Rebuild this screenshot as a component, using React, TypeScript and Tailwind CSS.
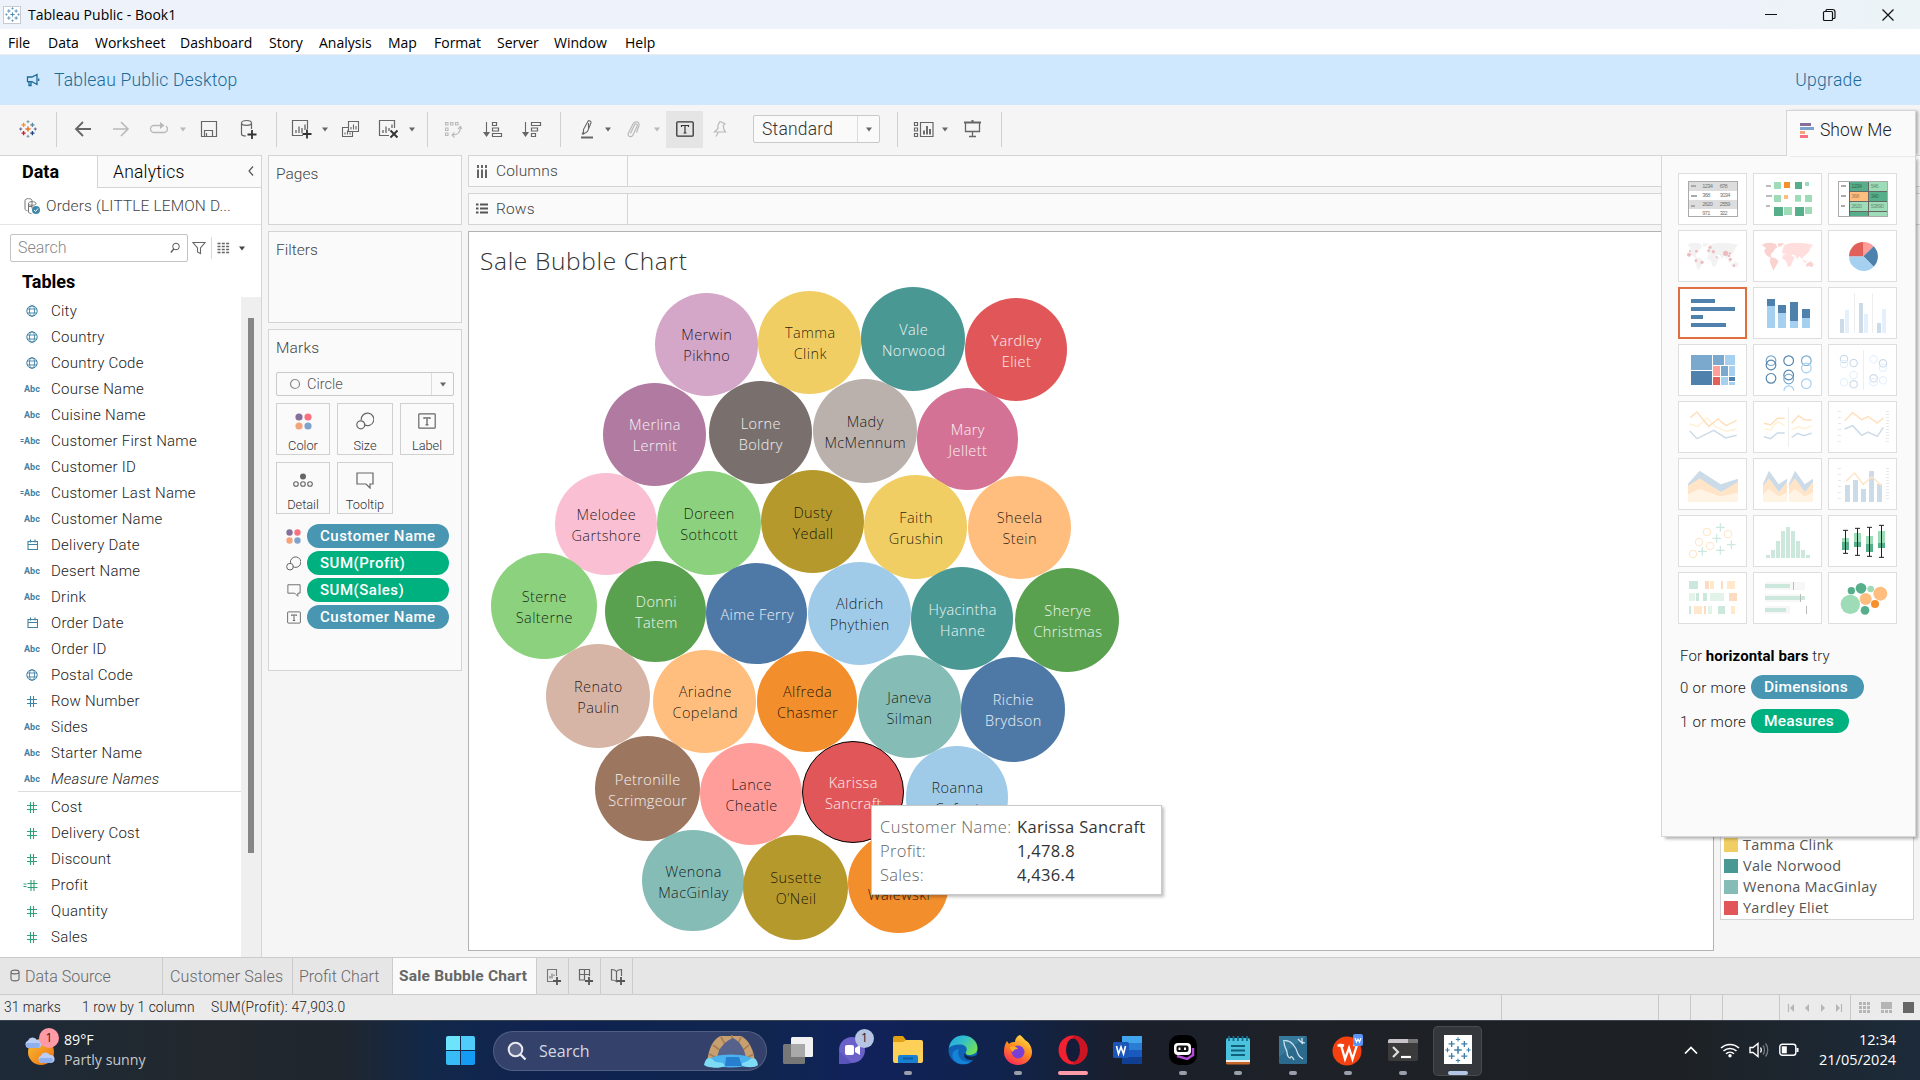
import React from "react";

type P = { className?: string };

const UI = "font-['Roboto',sans-serif] font-[350]";

function Svg({ w, h, vb, className = "", children }: { w: number; h: number; vb?: string; className?: string; children: React.ReactNode }) {
  return (
    <svg width={w} height={h} viewBox={vb ?? `0 0 ${w} ${h}`} fill="none" className={`block shrink-0 ${className}`}>
      {children}
    </svg>
  );
}

const plus = (x: number, y: number, r: number) => `M${x - r} ${y}h${2 * r}M${x} ${y - r}v${2 * r}`;

function TableauLogo({ s, mono = false, className = "" }: { s: number; mono?: boolean; className?: string }) {
  const c = (k: string) => (mono ? "#3f7fa8" : k);
  const t = (n: number) => (mono ? n * 0.72 : n);
  return (
    <Svg w={s} h={s} vb="0 0 18 18" className={className}>
      <path d={plus(9, 9, 2.6)} stroke={c("#e8762d")} strokeWidth={t(1.5)} />
      <path d={plus(4.6, 4.8, 2.1)} stroke={c("#eb912c")} strokeWidth={t(1.3)} />
      <path d={plus(13.4, 4.8, 2.1)} stroke={c("#59879b")} strokeWidth={t(1.3)} />
      <path d={plus(4.6, 13.2, 2.1)} stroke={c("#c72035")} strokeWidth={t(1.3)} />
      <path d={plus(13.4, 13.2, 2.1)} stroke={c("#1f447e")} strokeWidth={t(1.3)} />
      <path d={plus(9, 1.7, 1.5) + plus(9, 16.3, 1.5)} stroke={c("#7199a6")} strokeWidth={t(1)} />
      <path d={plus(1.7, 9, 1.5) + plus(16.3, 9, 1.5)} stroke={c("#5b6591")} strokeWidth={t(1)} />
    </Svg>
  );
}

function Caret({ className = "", color = "#666" }: { className?: string; color?: string }) {
  return (
    <Svg w={8} h={8} className={className}>
      <path d="M1 2.500h6L4 6.500z" fill={color} />
    </Svg>
  );
}

const Sep = ({ className = "" }: P) => <div className={`h-[35px] w-px shrink-0 bg-[#d0d0d0] ${className}`} />;

function TitleBar() {
  return (
    <div className="flex h-[29px] shrink-0 items-center bg-gradient-to-r from-[#eef2fa] from-90% to-[#ecf4f7] font-['Open_Sans',sans-serif]">
      <div className="ml-[3px] flex h-[18px] w-[18px] items-center justify-center border border-[#c8ccd2] bg-white">
        <TableauLogo s={15} mono />
      </div>
      <span className="ml-[7px] text-[14px] tracking-[0.020px] text-black">Tableau Public - Book1</span>
      <Svg w={140} h={20} className="ml-auto mr-[17px]">
        <path d="M2 9.500h12" stroke="#111" strokeWidth="1" />
        <path d="M60.500 7.500a1 1 0 0 1 1-1h7a1 1 0 0 1 1 1v7a1 1 0 0 1-1 1h-7a1 1 0 0 1-1-1zM63 6V5.500a1 1 0 0 1 1-1h5.500a2.500 2.500 0 0 1 2.500 2.500v5.500a1 1 0 0 1-1 1h-1" stroke="#111" strokeWidth="1.200" />
        <path d="M119.500 4.500l11 11M130.500 4.500l-11 11" stroke="#111" strokeWidth="1.200" />
      </Svg>
    </div>
  );
}

function MenuBar() {
  const items: [string, string][] = [
    ["File", "w-[40px]"], ["Data", "w-[47px]"], ["Worksheet", "w-[85px]"], ["Dashboard", "w-[89px]"],
    ["Story", "w-[50px]"], ["Analysis", "w-[69px]"], ["Map", "w-[46px]"], ["Format", "w-[63px]"],
    ["Server", "w-[57px]"], ["Window", "w-[71px]"], ["Help", "w-[50px]"],
  ];
  return (
    <div className="flex h-[26px] shrink-0 items-center border-b border-[#ececec] bg-white pl-[8px] pt-px font-['Open_Sans',sans-serif] text-[14px] text-black">
      {items.map(([t, w]) => (
        <span key={t} className={w}>{t}</span>
      ))}
    </div>
  );
}

function Banner() {
  return (
    <div className="flex h-[50px] shrink-0 items-center bg-[#cfe8fe] font-['Roboto',sans-serif] text-[17.500px] font-light text-[#1c6a96]">
      <Svg w={14} h={14} className="ml-[26px]">
        <path d="M1.500 4h4.500l5-2.500v10l-5-2.800H1.500zM3 8.700v3.800h2V9M12.700 5.500v2.500" stroke="#1c6a96" strokeWidth="1.300" />
      </Svg>
      <span className="ml-[14px] tracking-[0.200px]">Tableau Public Desktop</span>
      <span className="ml-auto mr-[58px] tracking-[0.300px]">Upgrade</span>
    </div>
  );
}

function Toolbar() {
  const g = "#666";
  const l = "#b9b9b9";
  return (
    <div className="flex h-[50px] shrink-0 items-center bg-[#f5f5f5] pb-[2px]">
      <TableauLogo s={18} className="ml-[19px]" />
      <Sep className="ml-[19px]" />
      <Svg w={18} h={18} className="ml-[17px]"><path d="M17 9H2M9 2L2 9l7 7" stroke={g} strokeWidth="1.800" /></Svg>
      <Svg w={18} h={18} className="ml-[20px]"><path d="M1 9h15M9 2l7 7-7 7" stroke={l} strokeWidth="1.600" /></Svg>
      <Svg w={20} h={18} className="ml-[19px]"><path d="M13 5.500H5a3.500 3.500 0 0 0 0 7h10a3.500 3.500 0 0 0 3.500-3.500c0-1-.5-2.200-1.500-2.900" stroke={l} strokeWidth="1.300" /><path d="M11 2l4.500 3.500L11 9z" fill={l} /></Svg>
      <Caret className="ml-[10px]" color={l} />
      <Svg w={18} h={18} className="ml-[13px]"><path d="M1.500 1.500h15v15h-15zM4.500 16v-5.500h8V16M6.500 13v3" stroke={g} strokeWidth="1.200" /></Svg>
      <Svg w={17} h={20} className="ml-[22px]"><path d="M1.500 4c0-1.500 2-2.500 5-2.500s5 1 5 2.500-2 2.300-5 2.300S1.500 5.500 1.500 4zV15c0 1.200 1.500 2 4.500 2M11.500 4v6" stroke={g} strokeWidth="1.200" /><path d={plus(12, 15.5, 4.5)} stroke="#333" strokeWidth="1.800" /></Svg>
      <Sep className="ml-[19px]" />
      <Svg w={21} h={20} className="ml-[14px]"><path d="M16.500 10V1.500h-15v15H12" stroke={g} strokeWidth="1.200" /><path d="M5 14v-3M8 14V7.500M11 14V9M14 11V5.500" stroke={g} strokeWidth="1.300" /><path d={plus(16, 15, 4.5)} stroke="#333" strokeWidth="1.800" /></Svg>
      <Caret className="ml-[9px]" />
      <Svg w={19} h={19} className="ml-[12px]"><path d="M7.500 1.500h10v10h-10zM7 7.500H1.500v9h10V12" stroke={g} strokeWidth="1.100" /><path d="M10 9.500V7M12.500 9.500V4.500M15 9.500V6M4 14.500v-2M6.500 14.500v-4M9 14.500v-2" stroke={g} strokeWidth="1.100" /></Svg>
      <Svg w={21} h={20} className="ml-[18px]"><path d="M16.500 9V1.500h-15v15H11" stroke={g} strokeWidth="1.200" /><path d="M5 14v-3M8 14V7.500M11 12V9M14 9V5.500" stroke={g} strokeWidth="1.300" /><path d="M12.500 11.500l7 7M19.500 11.500l-7 7" stroke="#333" strokeWidth="1.900" /></Svg>
      <Caret className="ml-[9px]" />
      <Sep className="ml-[11px]" />
      <Svg w={18} h={20} className="ml-[16px]"><path d="M1.500 3.500h2.500v2.500h-2.500zM6.500 3.500h2.500v2.500h-2.500zM11.500 3.500h2.500v2.500h-2.500zM1.500 9h2.500v2.500h-2.500zM1.500 14h2.500v2.500h-2.500zM16.500 8c0 5-3 8-8 8M14 10l2.500-2.500L18 10M10.500 13.500L8 16l2.500 2.500" stroke={l} strokeWidth="1.100" /></Svg>
      <Svg w={20} h={19} className="ml-[21px]"><path d="M3.500 2v13M1 12.500l2.500 3.500L6 12.500z" stroke={g} fill={g} strokeWidth="1.100" /><path d="M9.500 2.500h4v3h-4zM9.500 8h6v3h-6zM9.500 13.500h9v3h-9z" stroke={g} strokeWidth="1.200" /></Svg>
      <Svg w={20} h={19} className="ml-[19px]"><path d="M3.500 2v13M1 12.500l2.500 3.500L6 12.500z" stroke={g} fill={g} strokeWidth="1.100" /><path d="M9.500 2.500h9v3h-9zM9.500 8h6v3h-6zM9.500 13.500h4v3h-4z" stroke={g} strokeWidth="1.200" /></Svg>
      <Sep className="ml-[18px]" />
      <Svg w={14} h={20} className="ml-[19px]"><path d="M3.500 10.500L8 2.200c.8-1.200 3.500-.1 3 1.500L7.500 12.500l-4 2.500zM8.500 4v6M2 15.500l1.500-3" stroke={g} strokeWidth="1.100" /><path d="M1 18.500h12" stroke={g} strokeWidth="2" /></Svg>
      <Caret className="ml-[10px]" />
      <Svg w={15} h={19} className="ml-[14px]"><path d="M4.500 13.500l4-8.500c1-2 3.500-1 2.700 1L7 15c-1.500 3-6 1.500-4.700-1.700L7 4C8.500 .500 14 1.500 13 5.500l-2.500 7" stroke={l} strokeWidth="1.200" /></Svg>
      <Caret className="ml-[12px]" color={l} />
      <div className="ml-[5px] flex h-[37px] w-[37px] items-center justify-center bg-[#e5e5e5]">
        <Svg w={18} h={16}><rect x=".8" y=".8" width="16.400" height="14.400" rx="1" stroke="#333" strokeWidth="1.300" /><path d="M5.500 6V4.500h7V6M9 4.500v7.500M7.500 12h3" stroke="#333" strokeWidth="1.200" /></Svg>
      </div>
      <Svg w={14} h={18} className="ml-[10px]"><path d="M7 1.500l5 2.200-1.800 2 .8 4 1.500 2.300H1.500L5 8.500V5zM5.500 12L3 16.500" stroke={l} strokeWidth="1.200" /></Svg>
      <div className={`ml-[26px] flex h-[28px] w-[127px] items-center rounded-[2px] border border-[#c9c9c9] bg-[#fafafa] font-['Roboto',sans-serif] text-[17.500px] font-light text-[#333]`}>
        <span className="flex-1 pl-[8px] tracking-[0.200px]">Standard</span>
        <div className="flex h-full w-[22px] items-center justify-center border-l border-[#dcdcdc]"><Caret /></div>
      </div>
      <Sep className="ml-[17px]" />
      <Svg w={21} h={17} className="ml-[15px]"><path d="M1.500 1.500h3v3h-3zM1.500 7h3v3h-3zM1.500 12.500h3v3h-3zM7.500 1.500h12.500v14H7.500z" stroke={g} strokeWidth="1.200" /><path d="M11 13.500v-4M14 13.500V5M17 13.500V8" stroke={g} strokeWidth="1.900" /></Svg>
      <Caret className="ml-[7px]" />
      <Svg w={20} h={18} className="ml-[14px]"><path d="M1 2.500h17M9.500 0v2" stroke={g} strokeWidth="2" /><path d="M2.500 3v8.500h14V3M9.500 11.500v5M6 16.500h7" stroke={g} strokeWidth="1.300" /></Svg>
      <Sep className="ml-[18px]" />
    </div>
  );
}

type Kind = "geo" | "abc" | "=abc" | "date" | "num" | "=num";

function FieldIcon({ kind, color }: { kind: Kind; color: string }) {
  if (kind === "geo")
    return (
      <Svg w={12} h={12}><circle cx="6" cy="6" r="5.200" stroke={color} /><ellipse cx="6" cy="6" rx="2.500" ry="5.200" stroke={color} strokeWidth=".9" /><path d="M1 4h10M1 8h10" stroke={color} strokeWidth=".9" /></Svg>
    );
  if (kind === "date")
    return (
      <Svg w={11} h={12}><path d="M1 2.500h9.500v8H1zM1 5.500h9.500M3.500.500v3M8 .500v3" stroke={color} strokeWidth="1.100" /></Svg>
    );
  if (kind === "num" || kind === "=num")
    return (
      <Svg w={kind === "num" ? 10 : 19} h={12} vb={kind === "num" ? "0 0 10 12" : "-4.500 0 19 12"}>
        <path d="M0 4.500h10M0 8.500h10M3.500 1v11M6.500 1v11" stroke={color} strokeWidth="1.100" />
        {kind === "=num" && <path d="M-4 5h3M-4 7.500h3" stroke={color} />}
      </Svg>
    );
  return (
    <span className="flex items-center text-[9px] leading-none font-bold tracking-[0.100px]" style={{ color }}>
      {kind === "=abc" && <span className="ml-[-4px] text-[7px]">=</span>}
      Abc
    </span>
  );
}

function Field({ name, kind, green }: { name: string; kind: Kind; green?: boolean }) {
  return (
    <div className="flex h-[26px] items-center">
      <div className="flex w-[50px] justify-center pl-[14px]"><FieldIcon kind={kind} color={green ? "#31a076" : "#3f82a3"} /></div>
      <span className={name === "Measure Names" ? "pl-px italic" : "pl-px"}>{name}</span>
    </div>
  );
}

const DIMS: [string, Kind][] = [
  ["City", "geo"], ["Country", "geo"], ["Country Code", "geo"], ["Course Name", "abc"], ["Cuisine Name", "abc"],
  ["Customer First Name", "=abc"], ["Customer ID", "abc"], ["Customer Last Name", "=abc"], ["Customer Name", "abc"],
  ["Delivery Date", "date"], ["Desert Name", "abc"], ["Drink", "abc"], ["Order Date", "date"], ["Order ID", "abc"],
  ["Postal Code", "geo"], ["Row Number", "num"], ["Sides", "abc"], ["Starter Name", "abc"], ["Measure Names", "abc"],
];
const MEAS: [string, Kind][] = [
  ["Cost", "num"], ["Delivery Cost", "num"], ["Discount", "num"], ["Profit", "=num"], ["Quantity", "num"], ["Sales", "num"],
];

function DataPane() {
  return (
    <div className={`flex w-[262px] shrink-0 flex-col border-r border-[#d4d4d4] bg-white ${UI} text-[#1c1c1c]`}>
      <div className="flex h-[33px] shrink-0 border-t border-[#d4d4d4] text-[17.500px]">
        <div className="flex w-[97px] items-center pl-[22px] pb-px text-[18px] font-bold text-black">Data</div>
        <div className="flex flex-1 items-center border-b border-l border-[#d4d4d4] bg-[#fafafa] pl-[15px]">
          <span className="pt-[2px] tracking-[0.200px] text-black">Analytics</span>
          <Svg w={8} h={12} className="mt-[-2px] mr-[6px] ml-auto"><path d="M6 1.500L2 6l4 4.500" stroke="#555" strokeWidth="1.200" /></Svg>
        </div>
      </div>
      <div className="flex h-[37px] shrink-0 items-center border-b border-[#e4e4e4] text-[15.500px] text-[#444]">
        <Svg w={18} h={18} className="ml-[23px]">
          <path d="M2 3.500C2 1 9 1 9 3.500v8M2 3.500V12c0 1 1 1.500 2.500 1.800M5.500 6.500C5.500 4 13 4 13 6.500S5.500 9 5.500 6.500V15c0 1 1.500 1.500 3 1.500M5 9.500h4" stroke="#777" />
          <circle cx="13" cy="13" r="4" fill="#3f87a8" /><path d="M11 13l1.500 1.500 2.500-3" stroke="#fff" />
        </Svg>
        <span className="ml-[5px] pt-px tracking-[0.130px]">Orders (LITTLE LEMON D...</span>
      </div>
      <div className="flex h-[46px] shrink-0 items-center pl-[10px]">
        <div className="flex h-[28px] w-[178px] items-center rounded-[2px] border border-[#c4c4c4] px-[7px] text-[16px] font-light text-[#888]">
          <span>Search</span>
          <Svg w={10} h={12} className="ml-auto"><circle cx="6" cy="4.500" r="3.300" stroke="#555" /><path d="M3.800 7L.800 10.500" stroke="#555" strokeWidth="1.300" /></Svg>
        </div>
        <Svg w={14} h={14} className="ml-[4px]"><path d="M1 1.500h12L8.500 7v5.500L5.500 11V7z" stroke="#666" strokeWidth="1.100" /></Svg>
        <div className="mx-[5px] h-[22px] w-px bg-[#d8d8d8]" />
        <Svg w={13} h={12}><path d="M.500 1.500h12M.500 4.500h12M.500 7.500h12M.500 10.500h12" stroke="#666" strokeWidth="1.300" strokeDasharray="3 1.300" /></Svg>
        <Caret className="ml-[8px]" color="#444" />
      </div>
      <div className="flex h-[26px] shrink-0 items-center pb-[6px] pl-[22px] text-[18px] font-bold text-black">Tables</div>
      <div className="flex flex-1">
        <div className="flex-1 pt-[1px] text-[15px] tracking-[0.250px]">
          {DIMS.map(([n, k]) => <Field key={n} name={n} kind={k} />)}
          <div className="mt-[-1px] mb-[2px] ml-[18px] h-px bg-[#dcdcdc]" />
          {MEAS.map(([n, k]) => <Field key={n} name={n} kind={k} green />)}
        </div>
        <div className="w-[20px] bg-[#efefef] pt-[21px]"><div className="ml-[7px] h-[535px] w-[6px] bg-[#868686]" /></div>
      </div>
    </div>
  );
}

const ColorDots = ({ s }: { s: number }) => (
  <Svg w={s} h={s} vb="0 0 17 17">
    <circle cx="4" cy="4" r="3.600" fill="#86709b" /><circle cx="13" cy="4" r="3.600" fill="#f9707f" />
    <circle cx="4" cy="13" r="3.600" fill="#f5a37b" /><circle cx="13" cy="13" r="3.600" fill="#7da3cc" />
  </Svg>
);
const SizeIcon = ({ s }: { s: number }) => (
  <Svg w={s} h={s} vb="0 0 18 18"><path d="M8 12.600A6.300 6.300 0 1 0 5.300 8.200" stroke="#666" strokeWidth="1.200" /><circle cx="4.800" cy="12.800" r="4" stroke="#666" strokeWidth="1.200" /></Svg>
);
const LabelIcon = ({ w, h }: { w: number; h: number }) => (
  <Svg w={w} h={h} vb="0 0 18 16"><rect x=".8" y=".8" width="16.400" height="14.400" rx=".8" stroke="#666" strokeWidth="1.200" /><path d="M6 6V4.800h6V6M9 5v6.500M7.500 11.800h3" stroke="#666" strokeWidth="1.300" /></Svg>
);
const DetailIcon = () => (
  <Svg w={20} h={15}><circle cx="10" cy="3.500" r="3" fill="#666" /><circle cx="3" cy="11" r="2.300" stroke="#666" strokeWidth="1.100" /><circle cx="10" cy="11" r="2.300" stroke="#666" strokeWidth="1.100" /><circle cx="17" cy="11" r="2.300" stroke="#666" strokeWidth="1.100" /></Svg>
);
const TooltipIcon = ({ w, h }: { w: number; h: number }) => (
  <Svg w={w} h={h} vb="0 0 18 17"><path d="M1 1h16v11h-3v4l-4-4H1z" stroke="#666" strokeWidth="1.200" /></Svg>
);

function MarkButton({ label, icon, className }: { label: string; icon: React.ReactNode; className: string }) {
  return (
    <div className={`flex h-[52px] flex-col items-center border border-[#d0d0d0] bg-[#fafafa] text-[12.800px] text-[#333] ${className}`}>
      <div className="flex h-[34px] items-center justify-center">{icon}</div>
      <span className="leading-[15px]">{label}</span>
    </div>
  );
}

function Pill({ icon, text, className }: { icon: React.ReactNode; text: string; className: string }) {
  return (
    <div className="flex h-[24px] items-center">
      <div className="flex w-[25px] justify-center pr-[2px]">{icon}</div>
      <div className={`flex h-[24px] w-[142px] items-center rounded-full pt-px pl-[13px] text-[15px] font-medium tracking-[0.500px] text-white ${className}`}>{text}</div>
    </div>
  );
}

function Cards() {
  const card = "border border-[#d4d4d4] bg-[#fafafa]";
  return (
    <div className={`ml-[6px] flex w-[194px] shrink-0 flex-col gap-[6px] ${UI} text-[15.500px] text-[#444]`}>
      <div className={`${card} h-[70px] pl-[7px] pt-[7px]`}>Pages</div>
      <div className={`${card} h-[92px] pl-[7px] pt-[7px]`}>Filters</div>
      <div className={`${card} h-[342px] pl-[7px]`}>
        <div className="pt-[6px] pb-px leading-[24px] tracking-[0.200px]">Marks</div>
        <div className="mt-[11px] flex h-[24px] w-[178px] items-center rounded-[2px] border border-[#c9c9c9] bg-[#fafafa] text-[14.500px] text-[#555]">
          <Svg w={12} h={12} className="ml-[12px]"><circle cx="6" cy="6" r="4.500" stroke="#888" strokeWidth="1.200" /></Svg>
          <span className="ml-[6px] flex-1 pt-px">Circle</span>
          <div className="flex h-full w-[22px] items-center justify-center border-l border-[#dcdcdc]"><Caret /></div>
        </div>
        <div className="mt-[7px] flex gap-[7px]">
          <MarkButton className="w-[54px]" label="Color" icon={<ColorDots s={17} />} />
          <MarkButton className="w-[56px]" label="Size" icon={<SizeIcon s={18} />} />
          <MarkButton className="w-[54px]" label="Label" icon={<LabelIcon w={18} h={16} />} />
        </div>
        <div className="mt-[7px] flex gap-[7px]">
          <MarkButton className="w-[54px]" label="Detail" icon={<DetailIcon />} />
          <MarkButton className="w-[56px]" label="Tooltip" icon={<TooltipIcon w={18} h={17} />} />
        </div>
        <div className="mt-[10px] flex flex-col gap-[3px] pl-[6px]">
          <Pill icon={<ColorDots s={15} />} text="Customer Name" className="bg-[#4996b2]" />
          <Pill icon={<SizeIcon s={15} />} text="SUM(Profit)" className="bg-[#00b180]" />
          <Pill icon={<TooltipIcon w={14} h={13} />} text="SUM(Sales)" className="bg-[#00b180]" />
          <Pill icon={<LabelIcon w={14} h={13} />} text="Customer Name" className="bg-[#4996b2]" />
        </div>
      </div>
    </div>
  );
}

type Bubble = [number, number, number, string, string, boolean];
const BUBBLES: Bubble[] = [
  [706.2, 344.5, 51.6, "#d4a6c8", "Merwin\nPikhno", false],
  [809.8, 342.3, 51.6, "#f1ce63", "Tamma\nClink", false],
  [913.2, 339, 52, "#499894", "Vale\nNorwood", true],
  [1016, 349.7, 51.4, "#e15759", "Yardley\nEliet", true],
  [654.5, 434.2, 51.6, "#b07aa1", "Merlina\nLermit", true],
  [760.3, 432.7, 51.8, "#79706e", "Lorne\nBoldry", true],
  [864.7, 431.3, 52.1, "#bab0ac", "Mady\nMcMennum", false],
  [967.4, 439, 50.9, "#d37295", "Mary\nJellett", true],
  [605.8, 523.8, 50.8, "#fabfd2", "Melodee\nGartshore", false],
  [708.7, 522.8, 52, "#8cd17d", "Doreen\nSothcott", false],
  [812.5, 521.7, 51.6, "#b6992d", "Dusty\nYedall", false],
  [915.7, 527.2, 51.8, "#f1ce63", "Faith\nGrushin", false],
  [1019.2, 527.3, 51.6, "#ffbe7d", "Sheela\nStein", false],
  [543.8, 606.2, 52.8, "#8cd17d", "Sterne\nSalterne", false],
  [655.9, 611.3, 50.6, "#59a14f", "Donni\nTatem", true],
  [756.8, 613.5, 50.5, "#4e79a7", "Aime Ferry", true],
  [859.3, 613.5, 51.4, "#a0cbe8", "Aldrich\nPhythien", false],
  [962.2, 618.7, 51.3, "#499894", "Hyacintha\nHanne", true],
  [1067.4, 619.8, 52, "#59a14f", "Sherye\nChristmas", true],
  [597.9, 696, 52.2, "#d7b5a6", "Renato\nPaulin", false],
  [704.8, 701.3, 51.5, "#ffbe7d", "Ariadne\nCopeland", false],
  [807, 701.3, 50.4, "#f28e2b", "Alfreda\nChasmer", false],
  [909, 706.7, 51.5, "#86bcb6", "Janeva\nSilman", false],
  [1012.8, 709.5, 52.1, "#4e79a7", "Richie\nBrydson", true],
  [647.2, 788.7, 52.5, "#9d7660", "Petronille\nScrimgeour", true],
  [751, 794, 51.4, "#ff9d9a", "Lance\nCheatle", false],
  [852.8, 791.7, 50.9, "#e15759", "Karissa\nSancraft", true],
  [957, 797.3, 51.4, "#a0cbe8", "Roanna\nCofant", false],
  [693, 880.8, 50.6, "#86bcb6", "Wenona\nMacGinlay", false],
  [795.6, 887.5, 52.3, "#b6992d", "Susette\nO’Neil", false],
  [898.5, 883, 50.4, "#f28e2b", "Shermie\nWalewski", false],
];

/* Plot coordinates are page based; the sheet's inner corner sits at (469, 232). */
function Sheet() {
  return (
    <div className="relative h-[720px] w-[1246px] overflow-hidden border border-[#b3b3b3] bg-white font-['Open_Sans',sans-serif]">
      <div className="pl-[11px] pt-[11px] text-[24.500px] leading-[36px] font-light tracking-[0.650px] text-[#333]">Sale Bubble Chart</div>
      {BUBBLES.map(([x, y, r, c, t, light]) => (
        <div
          key={t}
          className={`absolute flex items-center justify-center rounded-full pl-[1px] pt-[2px] text-center text-[14.500px] leading-[21px] font-[350] tracking-[0.400px] whitespace-pre ${light ? "text-white/90" : "text-black/85"} ${t.startsWith("Karissa") ? "border border-black" : ""}`}
          style={{ left: x - r - 469, top: y - r - 232, width: 2 * r, height: 2 * r, backgroundColor: c }}
        >
          {t}
        </div>
      ))}
      <div className="absolute left-[402px] top-[573px] grid h-[90px] w-[291px] grid-cols-[137px_auto] content-start border border-[#c9c9c9] bg-white pl-[8px] pt-[9px] text-[16.500px] leading-[24px] whitespace-nowrap text-[#333] shadow-[2px_2px_3px_rgba(0,0,0,0.25)]">
        <span className="font-light tracking-[0.450px] text-[#666]">Customer Name:</span><span className="font-medium tracking-[0.350px]">Karissa Sancraft</span>
        <span className="font-light tracking-[0.300px] text-[#666]">Profit:</span><span className="tracking-[0.300px]">1,478.8</span>
        <span className="font-light tracking-[0.300px] text-[#666]">Sales:</span><span className="tracking-[0.300px]">4,436.4</span>
      </div>
    </div>
  );
}

function Shelf({ label, icon }: { label: string; icon: React.ReactNode }) {
  return (
    <div className={`flex h-[32px] items-center border border-r-0 border-[#d4d4d4] bg-[#fafafa] ${UI} text-[15.500px] text-[#444]`}>
      <div className="flex h-full w-[159px] items-center border-r border-[#d4d4d4] pl-[7px]">{icon}<span className="ml-[8px] pt-[2px] tracking-[0.150px]">{label}</span></div>
    </div>
  );
}

function Legend() {
  const rows: [string, string][] = [["Tamma Clink", "bg-[#f1ce63]"], ["Vale Norwood", "bg-[#499894]"], ["Wenona MacGinlay", "bg-[#86bcb6]"], ["Yardley Eliet", "bg-[#e15759]"]];
  return (
    <div className="mt-[590px] ml-[6px] h-[99px] w-[194px] border border-[#d4d4d4] bg-white pl-[3px] pt-[12px] font-['Open_Sans',sans-serif] text-[14.500px] tracking-[0.250px] text-[#555]">
      {rows.map(([n, c]) => (
        <div key={n} className="flex h-[21px] items-center"><div className={`h-[14px] w-[14px] ${c}`} /><span className="ml-[5px]">{n}</span></div>
      ))}
    </div>
  );
}

/* Thumbnails are drawn on a 207 x 156 grid, three units to the pixel. */
function Thumb({ x, y, selected, children }: { x: number; y: number; selected?: boolean; children: React.ReactNode }) {
  return (
    <div className={`h-[52px] w-[69px] overflow-hidden bg-white ${selected ? "outline-2 -outline-offset-2 outline-[#df6f3c]" : "outline-1 -outline-offset-1 outline-[#dedede]"}`}>
      <Svg w={69} h={52} vb={`${x} ${y} 207 156`}>{children}</Svg>
    </div>
  );
}

const R = ({ x, y, w, h, f }: { x: number; y: number; w: number; h: number; f: string }) => <rect x={x} y={y} width={w} height={h} fill={f} />;
const N = ({ x, y, children, f = "#777" }: { x: number; y: number; children: string; f?: string }) => (
  <text x={x} y={y} fontSize="17" fontFamily="Liberation Sans" fill={f} textLength={children.length * 8}>{children}</text>
);

const AMERICA = "M366 466l8-6 20-2 14 4 4 10-8 6-4 8-6 4-2 8 6 6-10-2-10-8-6-12 6-8zM413 460h20l-10 9-8 2zM392 502l14 2 10 10-8 14-8 14-5-12-6-16z";
const OLDWORLD = "M428 478l6-14 16-4 20-2 24 2 26 4-8 8-4 12-10 10-8 6-4 8-8-10-6 10-8-14-14 2-10-4-14-2zM430 494l18-3 16 12-6 10-6 16-8 2-6-18-12-8zM488 508l14 8-10 2z";
const AUS = "M498 522l14-8 9 8-4 10-10-4-8 2z";

function ShowMe() {
  const d = "#4e82ad", m = "#7aa9cd", s = "#a5d0f0", g1 = "#9edcb8", g2 = "#57ae8b", o = "#f6902c", o2 = "#ffbe80";
  const fb = "#ccdbe8", fl = "#e4f1fc", fo = "#ffe8cc", fy = "#fff2d6", fg = "#cce7dc";
  const ring = (x: number, y: number, c: string) => <circle key={`${x}-${y}`} cx={x} cy={y} r="14.500" stroke={c} strokeWidth="3.500" />;
  const sring = (x: number, y: number, c: string) => <circle key={`${x}-${y}`} cx={x} cy={y} r="11" stroke={c} strokeWidth="3.500" />;
  const ticks = (x: number, y: number, n: number, st: number) => Array.from({ length: n }, (_, i) => <rect key={`${x}-${i}`} x={x} y={y + i * st} width="9" height="2" fill="#ddd" />);
  return (
    <div className={`absolute right-[4px] top-[110px] flex w-[255px] flex-col items-end ${UI}`}>
      <div className="z-10 mb-[-1px] flex h-[46px] w-[130px] items-center border border-b-0 border-[#d6d6d6] bg-[#fafafa] pl-[13px] text-[17.500px] text-[#222] shadow-[3px_0_3px_-1px_rgba(0,0,0,0.3)]">
        <Svg w={14} h={15} className="mt-[-7px]"><path d="M0 0h11v3H0z" fill="#86709b" /><path d="M0 4h14v3H0z" fill="#7da3cc" /><path d="M0 8h5v3H0z" fill="#f5a37b" /><path d="M0 12h8v3H0z" fill="#f9707f" /></Svg>
        <span className="mt-[-6px] ml-[6px]">Show Me</span>
      </div>
      <div className="h-[682px] w-[255px] border border-[#d6d6d6] bg-[#fafafa] pl-[16px] pt-[17px] text-[15px] text-[#222] shadow-[3px_3px_3px_-1px_rgba(0,0,0,0.3)]">
        <div className="grid w-[219px] grid-cols-[69px_69px_69px] gap-x-[6px] gap-y-[5px]">
          <Thumb x={114} y={249}>
            <R x={146} y={275} w={146} h={28} f="#ddd" /><R x={146} y={330} w={146} h={27} f="#ddd" /><rect x="145.500" y="274.500" width="147" height="105" stroke="#aaa" strokeWidth="3" />
            <R x={153} y={285} w={15} h={6} f="#aaa" /><R x={153} y={315} w={18} h={6} f="#aaa" /><R x={153} y={345} w={12} h={6} f="#aaa" />
            <N x={187} y={295}>1234</N><N x={239} y={295}>678</N><N x={187} y={322}>368</N><N x={239} y={322}>3034</N><N x={187} y={349}>2620</N><N x={239} y={349}>2559</N><N x={187} y={374}>971</N><N x={239} y={374}>322</N>
          </Thumb>
          <Thumb x={339} y={249}>
            <R x={378} y={285} w={15} h={6} f="#bbb" /><R x={378} y={315} w={18} h={6} f="#bbb" /><R x={378} y={345} w={12} h={6} f="#bbb" />
            <R x={402} y={276} w={21} h={21} f={g1} /><R x={432} y={276} w={18} h={18} f={o} /><R x={465} y={276} w={21} h={21} f={g2} /><R x={495} y={276} w={12} h={12} f={g1} />
            <R x={402} y={315} w={21} h={21} f={g1} /><R x={432} y={315} w={12} h={12} f={o2} /><R x={465} y={315} w={18} h={20} f={g1} /><R x={495} y={315} w={21} h={21} f={g1} />
            <R x={402} y={351} w={27} h={27} f={g2} /><R x={432} y={351} w={24} h={24} f={g1} /><R x={465} y={351} w={27} h={27} f={g2} /><R x={495} y={351} w={21} h={21} f={g1} />
          </Thumb>
          <Thumb x={564} y={249}>
            <R x={627} y={274} w={116} h={106} f="#666" /><R x={630} y={276} w={54} h={27} f={g2} /><R x={687} y={276} w={55} h={27} f={g1} /><R x={630} y={306} w={54} h={27} f={o2} /><R x={687} y={306} w={55} h={27} f={g2} /><R x={630} y={336} w={54} h={27} f={g1} /><R x={687} y={336} w={55} h={27} f={g1} /><R x={630} y={366} w={54} h={13} f={g2} /><R x={687} y={366} w={55} h={13} f={g1} />
            <rect x="595.500" y="274.500" width="147" height="105" stroke="#aaa" strokeWidth="3" />
            <R x={603} y={285} w={15} h={6} f="#aaa" /><R x={603} y={315} w={15} h={6} f="#aaa" /><R x={603} y={345} w={12} h={6} f="#aaa" />
            <N x={634} y={295} f="#366b56">1234</N><N x={692} y={295} f="#66907a">546</N><N x={634} y={325} f="#a87d50">368</N><N x={692} y={325} f="#366b56">340</N><N x={634} y={355} f="#66907a">2620</N><N x={692} y={355} f="#66907a">53890</N>
          </Thumb>

          <Thumb x={114} y={420}>
            <g transform="translate(-225 0)"><path d={AMERICA + OLDWORLD + AUS} fill="#f2f2f2" /></g>
            {[[147, 494, 6], [150, 484, 3], [169, 484, 4], [210, 472, 5], [206, 482, 4], [220, 485, 5], [257, 490, 8], [270, 490, 3.5], [267, 498, 4], [271, 508, 5], [230, 502, 3], [168, 512, 4], [186, 517, 5], [282, 527, 4]].map(([x, y, r]) => <circle key={`${x}${y}`} cx={x} cy={y} r={r} fill="#eebbc0" />)}
          </Thumb>
          <Thumb x={339} y={420}><path d={AMERICA + AUS} fill="#fad3d0" /><path d={OLDWORLD} fill="#ffdedd" /></Thumb>
          <Thumb x={564} y={420}>
            <path d="M670 499v-43a43 43 0 0 1 31 13z" fill="#ff9d9a" /><path d="M670 499l31-30a43 43 0 0 1 0 61z" fill={d} /><path d="M670 499l31 31a43.500 43.500 0 0 1-74-31z" fill={s} /><path d="M670 499h-43a43 43 0 0 1 43-43z" fill="#e1605a" />
          </Thumb>

          <Thumb x={114} y={591} selected><R x={153} y={627} w={72} h={12} f={d} /><R x={153} y={651} w={132} h={12} f={d} /><R x={153} y={675} w={36} h={12} f={d} /><R x={153} y={699} w={105} h={12} f={d} /></Thumb>
          <Thumb x={339} y={591}>
            <R x={381} y={627} w={24} h={21} f={d} /><R x={381} y={648} w={24} h={66} f={s} /><R x={414} y={645} w={24} h={24} f={d} /><R x={414} y={669} w={24} h={45} f={s} /><R x={450} y={636} w={24} h={57} f={d} /><R x={450} y={693} w={24} h={21} f={s} /><R x={486} y={657} w={24} h={27} f={d} /><R x={486} y={684} w={24} h={30} f={s} />
          </Thumb>
          <Thumb x={564} y={591}>
            <R x={642} y={609} w={3} h={120} f="#eee" /><R x={696} y={609} w={3} h={120} f="#eee" /><R x={600} y={687} w={12} h={42} f={fb} /><R x={615} y={660} w={12} h={69} f={fl} /><R x={657} y={639} w={12} h={90} f={fb} /><R x={672} y={672} w={12} h={57} f={fl} /><R x={711} y={699} w={12} h={30} f={fb} /><R x={726} y={657} w={12} h={72} f={fl} />
          </Thumb>

          <Thumb x={114} y={762}>
            <R x={153} y={795} w={63} h={45} f={m} /><R x={153} y={843} w={63} h={42} f={d} /><R x={219} y={795} w={33} h={30} f={m} /><R x={255} y={795} w={30} h={30} f={s} /><R x={219} y={828} w={21} h={30} f="#ffa09b" /><R x={243} y={828} w={21} h={30} f={m} /><R x={267} y={828} w={18} h={30} f={s} /><R x={219} y={861} w={21} h={24} f="#e1605a" /><R x={243} y={861} w={21} h={24} f={s} /><R x={267} y={861} w={18} h={12} f={d} /><R x={267} y={876} w={18} h={9} f={s} />
          </Thumb>
          <Thumb x={339} y={762}>{ring(393, 812, m)}{ring(393, 825, d)}{ring(393, 865, d)}{ring(446, 812, d)}{ring(446, 855, d)}{ring(446, 867, m)}<path d="M432 902a14.500 14.500 0 0 1 29 0" stroke={s} strokeWidth="3.500" />{ring(499, 812, m)}{ring(499, 834, s)}{ring(499, 881, s)}</Thumb>
          <Thumb x={564} y={762}><R x={669} y={780} w={3} h={120} f="#eee" />{sring(612, 807, fb)}{sring(612, 822, fl)}{sring(641, 819, fb)}{sring(641, 855, fl)}{sring(612, 877, fl)}{sring(641, 883, fb)}{sring(701, 808, fl)}{sring(729, 820, fb)}{sring(729, 833, fl)}{sring(701, 865, fb)}{sring(701, 877, fl)}{sring(729, 871, fl)}</Thumb>

          <Thumb x={114} y={933}><g strokeWidth="4.500"><path d="M149 1002l24 8 28-26 26 26 31 14 32-6" stroke={fy} /><path d="M151 983l20-17 35 43 28-22 24 20 32-16" stroke="#ffe0bd" /><path d="M149 1023l22 23 50-25 36 23 33-8" stroke={fb} /></g></Thumb>
          <Thumb x={339} y={933}><R x={444} y={951} w={3} h={120} f="#eee" /><g strokeWidth="4.500"><path d="M372 1000l20 5 20-20h22M455 1000l20-23 18 12 22 2" stroke="#ffe0bd" /><path d="M372 1017l20 3 20-26 22 12M455 1020l20-10 18 6 22-8" stroke={fy} /><path d="M372 1040l20 6 20-17h22M455 1042l18-12 18 7 24-7" stroke={fb} /></g></Thumb>
          <Thumb x={564} y={933}>{ticks(594, 963, 6, 18)}{ticks(738, 963, 11, 9)}<g strokeWidth="4.500"><path d="M614 992l24-24 27 21 19-9 28 19 18-15" stroke="#ffe0bd" /><path d="M614 1017l24-10 27 29 19-10 28 13 18-27" stroke={fb} /></g></Thumb>

          <Thumb x={114} y={54}><path d="M144 131l35-39 63 41 52-17v20l-52 20-63-38-35 20z" fill={fb} /><path d="M144 138l35-23 63 42 52-32v33l-52 12-63-22-35 16z" fill="#ffe4c8" /><path d="M144 164l35-16 63 22 52-12v28H144z" fill="#fff3e3" /></Thumb>
          <Thumb x={339} y={54}><g id="area"><path d="M369 131l18-39 29 41 25-17v20l-25 20-29-38-18 20z" fill={fb} /><path d="M369 138l18-23 29 42 25-32v33l-25 12-29-22-18 16z" fill="#ffe4c8" /><path d="M369 164l18-16 29 22 25-12v28h-72z" fill="#fff3e3" /></g><use href="#area" x="78" /></Thumb>
          <Thumb x={564} y={54}>{ticks(594, 84, 6, 18)}{ticks(738, 84, 11, 9)}<R x={615} y={135} w={15} h={51} f={fb} /><R x={639} y={120} w={15} h={66} f={fb} /><R x={663} y={147} w={15} h={39} f={fb} /><R x={687} y={93} w={15} h={93} f={fb} /><R x={711} y={132} w={15} h={54} f={fb} /><path d="M618 124l26-25 26 34 26-23 28 27" stroke="#ffe4c8" strokeWidth="4.500" /></Thumb>

          <Thumb x={114} y={225}>{sring(201, 276, fo)}{sring(264, 282, fo)}{sring(177, 306, fo)}{sring(210, 318, fo)}{sring(159, 342, fo)}<path d={plus(241, 262, 13) + plus(230, 295, 13) + plus(274, 314, 13) + plus(187, 334, 13) + plus(241, 331, 13)} stroke={fg} strokeWidth="3.500" /></Thumb>
          <Thumb x={339} y={225}>{[345, 330, 303, 273, 261, 273, 303, 330, 345].map((y, i) => <R key={i} x={378 + i * 15} y={y} w={12} h={354 - y} f={fg} />)}</Thumb>
          <Thumb x={564} y={225}>{[[606, 294, 306, 330, 271, 340], [642, 279, 306, 321, 265, 346], [678, 288, 312, 336, 262, 349], [714, 273, 309, 324, 256, 352]].map(([x, a, b, c, t, e]) => (
            <g key={x}><R x={x} y={a} w={21} h={b - a} f={g1} /><R x={x} y={b} w={21} h={c - b} f={g2} /><path d={`M${x + 10.5} ${t}V${e}M${x + 3} ${t}h15M${x + 3} ${e}h15`} stroke="#222" strokeWidth="3" /></g>))}</Thumb>

          <Thumb x={114} y={396}>
            <R x={147} y={423} w={27} h={24} f={fg} /><R x={195} y={423} w={12} h={24} f="#fcdcc0" /><R x={210} y={423} w={12} h={24} f={fo} /><R x={243} y={423} w={6} h={24} f="#fcdcc0" /><R x={261} y={423} w={24} h={24} f={fo} />
            <R x={147} y={459} w={18} h={24} f="#e2f4ea" /><R x={168} y={459} w={9} h={24} f={fg} /><R x={189} y={459} w={12} h={24} f={fg} /><R x={210} y={459} w={42} h={24} f="#e2f4ea" /><R x={267} y={459} w={24} h={24} f="#fcdcc0" />
            <R x={147} y={498} w={6} h={24} f={fg} /><R x={162} y={498} w={24} h={24} f={fo} /><R x={192} y={498} w={6} h={24} f="#fcdcc0" /><R x={204} y={498} w={12} h={24} f="#e2f4ea" /><R x={234} y={498} w={21} h={24} f={fg} /><R x={273} y={498} w={12} h={24} f={fo} />
          </Thumb>
          <Thumb x={339} y={396}>{[[426, 75, 120, 459], [462, 120, 105, 480], [498, 63, 75, 498]].map(([y, w, bg, t]) => (
            <g key={y}><R x={375} y={y} w={bg} h={24} f="#f7f7f7" /><R x={375} y={y + 6} w={w} h={12} f={fg} /><R x={t} y={y} w={3} h={24} f="#bbb" /></g>))}</Thumb>
          <Thumb x={564} y={396}>{([[631, 493, 29, g1], [634, 452, 11, g2], [663, 445, 16, g2], [692, 447, 10, g1], [721, 461, 21, o2], [677, 477, 18, o2], [705, 492, 12, o], [675, 511, 13, g2]] as [number, number, number, string][]).map(([x, y, r, c]) => <circle key={x} cx={x} cy={y} r={r} fill={c} />)}</Thumb>
        </div>
        <div className="pl-[2px]">
          <div className="mt-[22px] flex h-[20px] items-center tracking-[0.100px]"><span>For <b className="text-black">horizontal bars</b> try</span></div>
          <div className="mt-[9px] flex h-[24px] items-center"><span className="w-[71px] pt-[3px] tracking-[0.300px]">0 or more</span><span className="flex h-[24px] w-[113px] items-center rounded-full bg-[#4996b2] pt-px pl-[13px] text-[15.500px] font-medium tracking-[0.200px] text-white">Dimensions</span></div>
          <div className="mt-[10px] flex h-[24px] items-center"><span className="w-[71px] pt-[3px] tracking-[0.300px]">1 or more</span><span className="flex h-[24px] w-[98px] items-center rounded-full bg-[#00b180] pt-px pl-[13px] text-[15.500px] font-medium tracking-[0.200px] text-white">Measures</span></div>
        </div>
      </div>
    </div>
  );
}

function SheetTabs() {
  const t = "flex h-full items-center border-r border-[#cbcbcb] pt-px";
  const p = plus(14, 14, 4);
  return (
    <div className={`flex h-[38px] shrink-0 border-t border-b border-[#cbcbcb] bg-[#e6e6e6] ${UI} text-[16px] text-[#666]`}>
      <div className={`${t} w-[163px] pl-[10px]`}>
        <Svg w={10} h={13} className="mt-[-3px]"><path d="M1 3c0-2.500 8-2.500 8 0s-8 2.500-8 0v7c0 2.500 8 2.500 8 0V3" stroke="#666" strokeWidth="1.100" /></Svg>
        <span className="ml-[5px]">Data Source</span>
      </div>
      <div className={`${t} w-[130px] pl-[7px] tracking-[0.150px]`}>Customer Sales</div>
      <div className={`${t} w-[100px] pl-[6px]`}>Profit Chart</div>
      <div className={`${t} w-[144px] bg-[#fafafa] pl-[6px] text-[15.500px] font-bold tracking-[0.200px]`}>Sale Bubble Chart</div>
      <div className={`${t} w-[32px] justify-center`}><Svg w={20} h={20}><path d="M13.500 9V2.500H4.500v12H10M7 11.500V9M9 11.500V6.500M11 9V7.500" stroke="#777" strokeWidth="1.100" /><path d={p} stroke="#555" strokeWidth="1.800" /></Svg></div>
      <div className={`${t} w-[32px] justify-center`}><Svg w={20} h={20}><path d="M14.500 9V2.500H4.500v10.500H10M4.500 7.500h10M9.500 2.500V13" stroke="#666" strokeWidth="1.200" /><path d={p} stroke="#555" strokeWidth="1.800" /></Svg></div>
      <div className={`${t} w-[32px] justify-center`}><Svg w={20} h={20}><path d="M14.500 9V2.500c-2 0-4 .5-5 2-1-1.500-3-2-5-2v10.500c2.500 0 4 .5 5 1.500V4.500" stroke="#666" strokeWidth="1.200" /><path d={p} stroke="#555" strokeWidth="1.800" /></Svg></div>
    </div>
  );
}

function StatusBar() {
  return (
    <div className={`flex h-[25px] shrink-0 items-center bg-[#ebebeb] ${UI} text-[13.800px] text-[#222]`}>
      <span className="w-[78px] pl-[4px]">31 marks</span>
      <span className="w-[129px] pl-[4px] tracking-[0.100px]">1 row by 1 column</span>
      <span className="flex-1 pl-[4px] tracking-[0.250px]">SUM(Profit): 47,903.0</span>
      <div className="flex h-full items-center">
        <div className="h-full w-[157px] border-l border-[#c8c8c8]" />
        <div className="h-full w-[32px] border-l border-[#c8c8c8]" />
        <div className="h-full w-[32px] border-l border-[#c8c8c8]" />
        <div className="h-full w-[57px] border-l border-[#c8c8c8]" />
        <div className="flex h-full w-[71px] items-center border-l border-[#c8c8c8] pl-[7px]">
          <Svg w={57} h={8}><path d="M1.500 0v8M54.500 0v8" stroke="#b5b5b5" strokeWidth="1.200" /><path d="M7 0v8L3 4zM22 0v8l-4-4zM34 0v8l4-4zM49 0v8l4-4z" fill="#b5b5b5" /></Svg>
        </div>
        <div className="flex h-full w-[70px] items-center gap-[11px] border-l border-[#c8c8c8] pl-[8px]">
          <Svg w={11} h={11}><path d="M0 0h3v3H0zM4 0h3v3H4zM8 0h3v3H8zM0 4h3v3H0zM4 4h3v3H4zM8 4h3v3H8zM0 8h3v3H0zM4 8h3v3H4zM8 8h3v3H8z" fill="#b5b5b5" /></Svg>
          <Svg w={11} h={11}><path d="M0 0h11v7H0zM0 8h3v3H0zM4 8h3v3H4zM8 8h3v3H8z" fill="#b5b5b5" /></Svg>
          <div className="h-[11px] w-[11px] bg-[#666]" />
        </div>
      </div>
    </div>
  );
}

function TaskApp({ children, dot }: { children: React.ReactNode; dot?: string }) {
  return (
    <div className="relative flex h-[60px] w-[55px] items-center justify-center pb-[2px]">
      {children}
      {dot && <div className={`absolute bottom-[6px] h-[4px] rounded-full ${dot}`} />}
    </div>
  );
}

function TaskApps() {
  const gray = "w-[8px] bg-[#9aa0ab]";
  return (
    <div className="flex">
      <TaskApp><Svg w={30} h={28}><rect x="8" y="1" width="22" height="20" rx="1.500" fill="#f1f1f1" /><rect x="0" y="8" width="22" height="20" rx="1.500" fill="#777" /><path d="M8 8h14v13H8z" fill="#a9a9a9" /></Svg></TaskApp>
      <TaskApp>
        <Svg w={30} h={30}><circle cx="14" cy="15" r="13" fill="#6a62c8" /><path d="M1 16v13c5 0 10 0 13-1z" fill="#5a55bb" /><rect x="7" y="10" width="9" height="10" rx="2" fill="#fff" /><path d="M17 13l5-3v10l-5-3z" fill="#fff" /></Svg>
        <div className="absolute left-[30px] top-[8px] flex h-[19px] w-[19px] items-center justify-center rounded-full bg-[#b4c4e2] text-[12px] text-[#222]">1</div>
      </TaskApp>
      <TaskApp dot={gray}><Svg w={30} h={28}><path d="M0 2a2 2 0 0 1 2-2h8l3 4v5H0z" fill="#e0a012" /><path d="M0 6l10 0 3-2h15a2 2 0 0 1 2 2v19a2 2 0 0 1-2 2H2a2 2 0 0 1-2-2z" fill="#ffd058" /><path d="M5 27v-6a2 2 0 0 1 2-2h16a2 2 0 0 1 2 2v6z" fill="#1880d2" /><path d="M10 22.500h10" stroke="#0c5ba6" strokeWidth="2" /></Svg></TaskApp>
      <TaskApp>
        <Svg w={30} h={30}>
          <defs><linearGradient id="eg" x1="0" y1="0" x2="1" y2=".6"><stop offset="0" stopColor="#1fa4e8" /><stop offset=".5" stopColor="#35c1c8" /><stop offset="1" stopColor="#6fe05a" /></linearGradient></defs>
          <circle cx="15" cy="15" r="14.500" fill="#0f62b5" />
          <path d="M1 13C2 5 8 .500 15 .500 23 .500 29.500 6 29.500 13c0 5-4 7-8 7-3 0-4.500-1.500-3.500-3 2-3 0-7-5-7.500-5-.5-10 1-12 3.500z" fill="url(#eg)" />
          <path d="M11 14c-3 6 2 14 12 12.500-6 4.500-15 3-18-3-2-5 1-9 6-9.500z" fill="#1484d8" />
          <path d="M17 18c0 3 5 5 12 2l2 3-4 2c-7 1-13-2-10-7z" fill="#10264a" />
        </Svg>
      </TaskApp>
      <TaskApp dot={gray}>
        <Svg w={30} h={30}>
          <defs><linearGradient id="ff" x1=".8" y1="0" x2=".3" y2="1"><stop offset="0" stopColor="#ffe14a" /><stop offset=".5" stopColor="#ff8a1f" /><stop offset="1" stopColor="#ff2a5a" /></linearGradient></defs>
          <path d="M17 0c3 2 4 4 5 5 4 2 7 7 7 12a14 13 0 0 1-28 0C1 12 2 9 4 6l2 3c2-2 4-2 6-2 0-3 2-6 5-7z" fill="url(#ff)" />
          <circle cx="15" cy="17" r="6.500" fill="#7a3fd6" /><path d="M7 12c4-2 7 0 8 2-3 0-5 1-5 3-2-1-3-3-3-5z" fill="#ffae2b" />
        </Svg>
      </TaskApp>
      <TaskApp dot="w-[30px] bg-[#ff9aa6]">
        <Svg w={30} h={30}><circle cx="15" cy="15" r="14.500" fill="#f3202f" /><path d="M15 .500a14.500 14.500 0 0 1 0 29z" fill="#cc1522" /><ellipse cx="15" cy="15" rx="7" ry="11.500" fill="#131c38" /></Svg>
      </TaskApp>
      <TaskApp><Svg w={30} h={28}><path d="M9 0h20v7H9z" fill="#41a5ee" /><path d="M9 7h20v7H9z" fill="#2b7cd3" /><path d="M9 14h20v7H9z" fill="#185abd" /><path d="M9 21h20v7H9z" fill="#103f91" /><rect x="0" y="6" width="16" height="16" rx="1.500" fill="#1a56b8" /><path d="M3.500 10l2 8 2.500-7 2.500 7 2-8" stroke="#fff" strokeWidth="1.600" /></Svg></TaskApp>
      <TaskApp dot={gray}><Svg w={30} h={30}><rect x="1" y="0" width="28" height="30" rx="10" fill="#000" /><path d="M9 21l10 3 6-4v-7" stroke="#b44ad8" strokeWidth="2.500" /><rect x="6" y="8" width="17" height="12" rx="4" fill="#fff" /><rect x="8.500" y="10.500" width="12" height="6.500" rx="2" fill="#111" /><path d="M11.500 12.500v2.500M17 12.500v2.500" stroke="#fff" strokeWidth="2" /></Svg></TaskApp>
      <TaskApp dot={gray}><Svg w={26} h={30}><rect x="1" y="3" width="24" height="26" rx="2" fill="#4cc3dc" /><path d="M1 26h24v2a1.500 1.500 0 0 1-1.500 1.500h-21A1.500 1.500 0 0 1 1 28z" fill="#c7682a" /><path d="M1 25h24v2H1z" fill="#eee" /><path d="M4 1v5M8.500 1v5M13 1v5M17.500 1v5M22 1v5" stroke="#146f8f" strokeWidth="1.800" /><path d="M6 11h14M6 15.500h14M6 20h14" stroke="#11607c" strokeWidth="2" /></Svg></TaskApp>
      <TaskApp dot={gray}><Svg w={30} h={30}><rect x="1" y="1" width="28" height="28" rx="1.500" fill="#2b6a8c" /><path d="M1 1h28L1 22z" fill="#37799a" /><path d="M5 6c8-2 13 6 15 13 1 3 3 4 5 5M6 7c0 5 2 6 3 10 0 4 2 6 3 6 1-2 2-2 4 2M20 4l5 5M24 3v4l3 1" stroke="#cfe3ee" strokeWidth="1.300" /></Svg></TaskApp>
      <TaskApp dot={gray}><Svg w={32} h={32}><circle cx="15" cy="17" r="14.500" fill="#f5400f" /><path d="M5.500 11.500h6.500L9 11l4 14 4-11 3.500 11L25 11h-4" stroke="#fff" strokeWidth="2.300" /><rect x="21" y="0" width="10" height="12" rx="2" fill="#5c94f5" /><path d="M23 4l1.500 4L26 5l1.500 3L29 4" stroke="#fff" strokeWidth="1.200" /></Svg></TaskApp>
      <TaskApp dot={gray}><Svg w={30} h={24}><rect x="0" y="1" width="30" height="22" rx="2" fill="#3b3b3b" /><path d="M0 3a2 2 0 0 1 2-2h26a2 2 0 0 1 2 2v2H0z" fill="#c9c4c9" /><path d="M20 1h8a2 2 0 0 1 2 2v2H20z" fill="#777" /><path d="M5 9l5 5-5 5" stroke="#ddd" strokeWidth="2.200" /><path d="M13 19h10" stroke="#fff" strokeWidth="2.200" /></Svg></TaskApp>
      <TaskApp dot="w-[20px] bg-[#b4c4e4]">
        <div className="absolute inset-x-[3px] inset-y-[5px] rounded-[5px] border border-white/10 bg-white/10" />
        <div className="relative flex h-[29px] w-[28px] items-center justify-center bg-white"><TableauLogo s={26} mono /></div>
      </TaskApp>
    </div>
  );
}

function Cloud({ className = "", w, h }: { className?: string; w: number; h: number }) {
  return <Svg w={w} h={h} vb="0 0 18 12" className={className}><path d="M4 12a4 4 0 0 1 0-7.500A5 5 0 0 1 13 4a4 4 0 0 1 1 8z" fill="#b9cdf5" /><path d="M4 12a3 3 0 0 1-1-5h12a3 3 0 0 1-1 5z" fill="#8fb0ec" /></Svg>;
}

function Taskbar() {
  return (
    <div className="flex h-[60px] shrink-0 items-center overflow-hidden border-t border-[#3b4250] bg-[linear-gradient(90deg,#1d2a38_0,#22282d_200px,#20262e_340px,#12284a_430px,#0f2250_560px,#10264f_760px,#10225a_860px,#10234c_1000px,#1a1f2a_1130px,#1e2127_1300px,#1d2125_1680px,#1c2b3a_1920px)] font-['Open_Sans',sans-serif] text-white">
      <div className="relative ml-[24px] h-[40px] w-[40px]">
        <div className="absolute left-[4px] top-[8px] h-[26px] w-[26px] rounded-full bg-gradient-to-br from-[#f6c033] to-[#ec6a10]" />
        <Cloud w={18} h={12} className="absolute left-0 top-[5px]" />
        <Cloud w={18} h={12} className="absolute left-[13px] top-[20px]" />
        <div className="absolute left-[15px] top-[-3px] flex h-[20px] w-[20px] items-center justify-center rounded-full bg-[#ff9aa6] text-[12px] text-[#222]">1</div>
      </div>
      <div className="w-[382px] pb-[2px] text-[14.200px] leading-[20px]">
        <div>89°F</div>
        <div className="text-[#c5c8cd]">Partly sunny</div>
      </div>
      <div className="grid h-[29px] w-[29px] grid-cols-2 gap-[1px]">
        <div className="rounded-tl-[2px] bg-[#6ce4fc]" /><div className="rounded-tr-[2px] bg-[#50ccfa]" />
        <div className="rounded-bl-[2px] bg-[#38bcf8]" /><div className="rounded-br-[2px] bg-[#149cf5]" />
      </div>
      <div className="ml-[18px] flex h-[40px] w-[274px] items-center rounded-full border border-white/15 bg-[#34426b]">
        <Svg w={20} h={20} className="ml-[13px]"><circle cx="8.500" cy="8.500" r="6.800" stroke="#e8eaf0" strokeWidth="2" fill="#5c678a" /><path d="M13.500 13.500l5 5" stroke="#e8eaf0" strokeWidth="2.400" /></Svg>
        <span className="ml-[12px] flex-1 text-[16px] text-[#d4d8e2]">Search</span>
        <Svg w={54} h={34} className="mr-[8px]">
          <path d="M3 30C4 14 10 4 17 2h20c8 4 13 14 14 27z" fill="#c8a070" /><path d="M5 20l8 4M9 11l8 6M17 3l5 9M28 1v10M37 3l-4 9M45 11l-7 6M50 20l-8 4" stroke="#a67c52" strokeWidth="1.600" />
          <path d="M13 25C14 13 22 7 29 4c6 3 12 10 13 21z" fill="#56628c" /><ellipse cx="27" cy="27" rx="23" ry="6.500" fill="#4ab2ee" /><path d="M0 31c2-9 7-8 10-4 4 3 8-1 11 5-5 3-17 2-21-1zM54 31c-1-8-6-8-9-5-4 3-5 1-8 5 4 3 14 3 17 0z" fill="#7edcf5" /><path d="M22 23h13l3 9H21z" fill="#287fd0" />
        </Svg>
      </div>
      <div className="ml-[3px]"><TaskApps /></div>
      <div className="mr-[24px] ml-auto flex items-center pb-[2px]">
        <Svg w={14} h={8} className="mr-[22px]"><path d="M1 7.500l6-6 6 6" stroke="#fff" strokeWidth="1.700" /></Svg>
        <Svg w={20} h={16} className="mr-[9px]"><path d="M1 6a13 13 0 0 1 18 0M3.500 9a9.500 9.500 0 0 1 13 0M6 11.700a6 6 0 0 1 8 0" stroke="#fff" strokeWidth="1.500" /><circle cx="10" cy="13.700" r="1.700" fill="#fff" /></Svg>
        <Svg w={20} h={18} className="mr-[10px]"><path d="M1 6.500h3L9 2.500v13l-5-4H1z" stroke="#fff" strokeWidth="1.400" /><path d="M11.500 6.500c1 1.500 1 3.500 0 5" stroke="#fff" strokeWidth="1.300" /><path d="M14 4.500c2 2.500 2 6.500 0 9M16.500 2.500c3 3.500 3 9.500 0 13" stroke="#777d85" strokeWidth="1.300" /></Svg>
        <Svg w={20} h={14} className="mr-[20px]"><rect x=".8" y="1.300" width="16" height="11" rx="2.500" stroke="#fff" strokeWidth="1.400" /><rect x="2.800" y="3.300" width="5" height="7" fill="#fff" /><path d="M18.500 5v4" stroke="#fff" strokeWidth="2" /></Svg>
        <div className="text-right text-[14.500px] leading-[20px]"><div>12:34</div><div>21/05/2024</div></div>
      </div>
    </div>
  );
}

export default function App() {
  return (
    <div className="relative flex h-[1080px] w-[1920px] flex-col overflow-hidden bg-[#f5f5f5]">
      <TitleBar />
      <MenuBar />
      <Banner />
      <Toolbar />
      <div className="flex h-[802px] shrink-0">
        <DataPane />
        <Cards />
        <div className="ml-[6px] flex flex-1 flex-col">
          <div className="flex flex-col gap-[6px]">
            <Shelf label="Columns" icon={<Svg w={12} h={13}><path d="M2 0v3M6 0v3M10 0v3M2 4.500V13M6 4.500V13M10 4.500V13" stroke="#555" strokeWidth="1.800" /></Svg>} />
            <Shelf label="Rows" icon={<Svg w={12} h={11} className="mt-[-2px]"><path d="M0 1.500h2.500M0 5.500h2.500M0 9.500h2.500M4 1.500h8M4 5.500h8M4 9.500h8" stroke="#555" strokeWidth="1.800" /></Svg>} />
          </div>
          <div className="mt-[6px] flex">
            <Sheet />
            <Legend />
          </div>
        </div>
      </div>
      <SheetTabs />
      <StatusBar />
      <Taskbar />
      <ShowMe />
    </div>
  );
}
